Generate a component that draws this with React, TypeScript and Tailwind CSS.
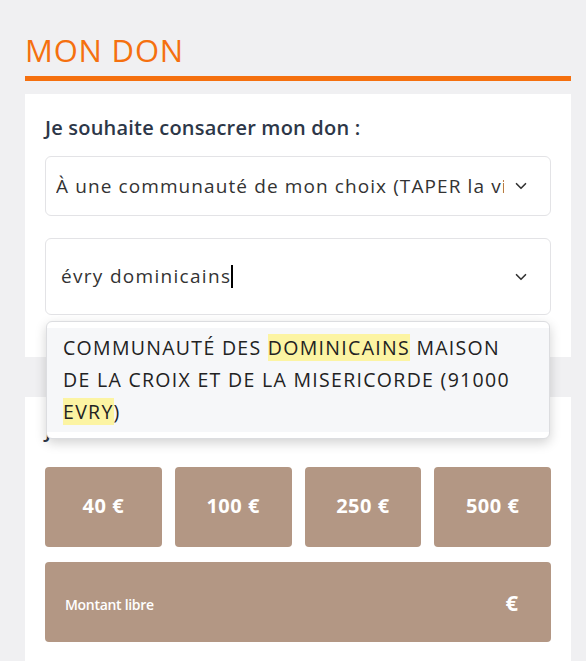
import { ChevronDown } from 'lucide-react'

const amounts = ['40 €', '100 €', '250 €', '500 €']

function Hl({ children }: { children: string }) {
  return <span className="bg-[#fcf4a3]">{children}</span>
}

export default function App() {
  return (
    <div
      className="min-h-[661px] bg-[#f0f0f2] pt-[30px] pl-[25px] pr-[15px]"
      style={{ fontFamily: '"Open Sans", "Liberation Sans", sans-serif' }}
    >
      {/* Heading */}
      <h1 className="text-[31px] leading-[40px] text-[#f5700f] tracking-[0.8px]">MON DON</h1>
      <div className="mt-[6px] h-[5px] bg-[#f5700f]" />

      {/* Card 1: destination */}
      <div className="relative z-10 mt-[13px] bg-white px-[20px] pt-[20px] pb-[42px]">
        <p className="text-[20px] leading-[28px] font-semibold text-[#2d3748] tracking-[0.2px]">
          Je souhaite consacrer mon don :
        </p>
        <div className="mt-[14px] flex h-[60px] items-center rounded-md border border-[#e3e3e6] pl-[10px] pr-[20px]">
          <span className="flex-1 overflow-hidden whitespace-nowrap text-[19px] text-[#333] tracking-[1.1px]">
            À une communauté de mon choix (TAPER la ville ou le nom)
          </span>
          <ChevronDown size={18} strokeWidth={2.2} className="ml-[8px] shrink-0 text-[#333]" />
        </div>
        <div className="relative mt-[22px]">
          <div className="flex h-[77px] items-center rounded-md border border-[#e3e3e6] pl-[15px] pr-[20px]">
            <span className="flex flex-1 items-center text-[19px] text-[#333] tracking-[1.3px]">
              évry dominicains
              <span className="inline-block h-[23px] w-[1.5px] bg-black" />
            </span>
            <ChevronDown size={18} strokeWidth={2.2} className="shrink-0 text-[#333]" />
          </div>
          {/* Autocomplete dropdown */}
          <div className="absolute left-[1px] right-[1px] top-[83px] rounded-md border border-[#dcdde0] bg-white py-[6px] shadow-[0_4px_12px_rgba(0,0,0,0.18)]">
            <div className="bg-[#f6f7f9] px-[16px] py-[4px] text-[19.5px] leading-[32px] text-[#222] tracking-[1.3px]">
              COMMUNAUTÉ DES <Hl>DOMINICAINS</Hl> MAISON
              <br />
              DE LA CROIX ET DE LA MISERICORDE (91000
              <br />
              <Hl>EVRY</Hl>)
            </div>
          </div>
        </div>
      </div>

      {/* Card 2: amount */}
      <div className="mt-[40px] bg-white px-[20px] pt-[20px] pb-[20px]">
        <p className="text-[20px] leading-[28px] font-semibold text-[#2d3748] tracking-[0.2px]">
          Je donne une fois
        </p>
        <div className="mt-[22px] grid grid-cols-4 gap-[13px]">
          {amounts.map(a => (
            <div
              key={a}
              className="flex h-[80px] items-center justify-center rounded-[4px] bg-[#b39784] pb-[2px] text-[20px] font-bold text-white tracking-[0.5px]"
            >
              {a}
            </div>
          ))}
        </div>
        <div className="mt-[15px] flex h-[80px] items-center justify-between rounded-[4px] bg-[#b39784] pl-[20px] pr-[33px]">
          <span className="pt-[4px] text-[14px] font-semibold text-white tracking-[-0.3px]">Montant libre</span>
          <span className="text-[22px] font-bold text-white">€</span>
        </div>
      </div>
    </div>
  )
}
